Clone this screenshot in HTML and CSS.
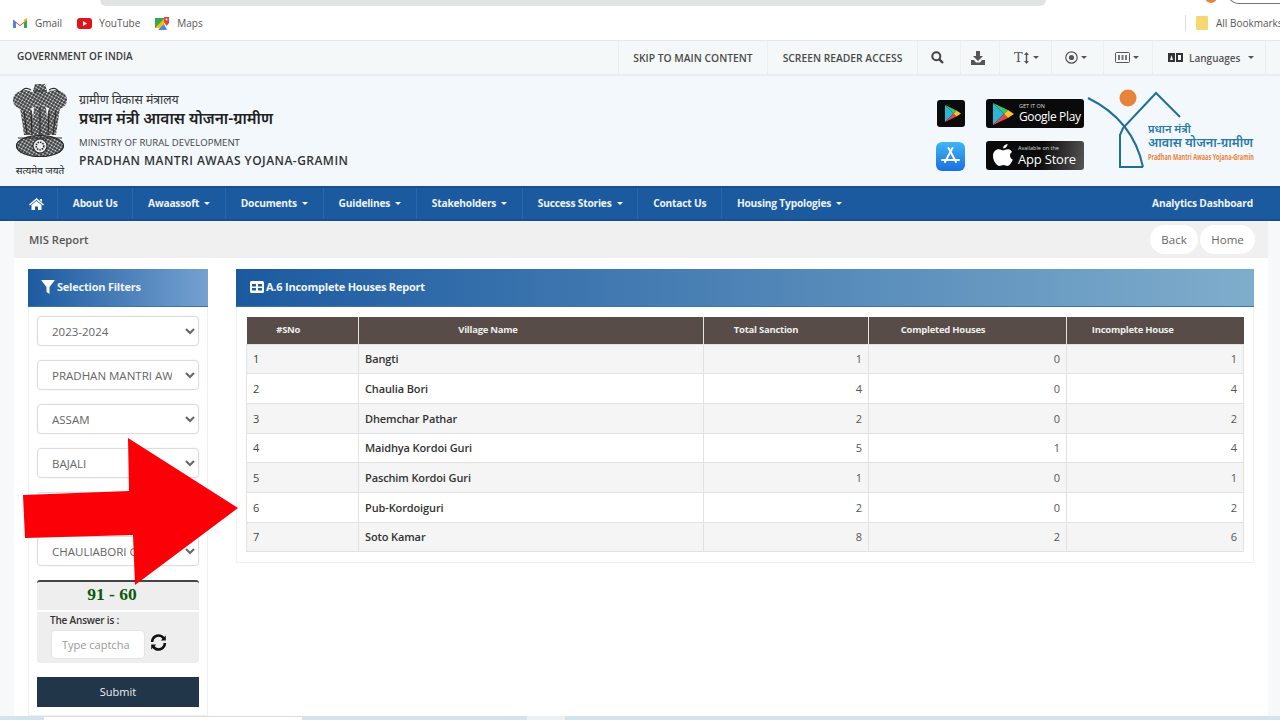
FILE: index.html
```html
<!DOCTYPE html>
<html lang="en">
<head>
<meta charset="utf-8">
<title>A.6 Incomplete Houses Report</title>
<link rel="stylesheet" href="styles.css">
</head>
<body>
<div class="browser">
  <div class="omni-row">
    <div class="omnibox"></div>
    <div class="ext-dot"></div>
    <div class="profile"></div>
  </div>
  <div class="bookmarks">
    <span class="bm bm-gmail">
      <svg class="bm-icon" width="14" height="11" viewBox="0 0 14 11"><path d="M0 1.500 7 7l7-5.500V10h-3V5L7 8 3 5v5H0z" fill="#e44336"/><path d="M0 2v8h3V4.500z" fill="#4a87e0"/><path d="M14 2v8h-3V4.500z" fill="#34a853"/><path d="M11 1.500 14 0v2l-3 2.500z" fill="#fbbc04"/></svg>Gmail</span>
    <span class="bm bm-yt">
      <svg class="bm-icon" width="15" height="11" viewBox="0 0 15 11"><rect width="15" height="11" rx="3" fill="#e0121b"/><path d="M6 3v5l4-2.500z" fill="#fff"/></svg>YouTube</span>
    <span class="bm bm-maps">
      <svg class="bm-icon" width="14" height="14" viewBox="0 0 14 14"><path d="M0 2h9v10H0z" fill="#34a853"/><path d="M0 12 9 3v9z" fill="#fbbc04"/><path d="M3 14l6-6 3 6z" fill="#4a87e0"/><path d="M9 1h5v6l-2.500 3L9 6z" fill="#e44336"/><circle cx="11.500" cy="3.500" r="1" fill="#fff"/></svg>Maps</span>
    <span class="bm-spacer"></span>
    <span class="bm-sep"></span>
    <svg class="bm-folder" width="12" height="14" viewBox="0 0 12 14"><rect width="12" height="14" rx="1" fill="#f6d873"/></svg>
    <span class="bm bm-all">All Bookmarks</span>
  </div>
</div>

<div class="govbar">
  <span class="gov-title">GOVERNMENT OF INDIA</span>
  <div class="gov-tools">
    <a class="tool tool-text">SKIP TO MAIN CONTENT</a>
    <a class="tool tool-text">SCREEN READER ACCESS</a>
    <a class="tool tool-search"><svg width="13" height="13" viewBox="0 0 13 13"><circle cx="5.300" cy="5.300" r="4" fill="none" stroke="#444" stroke-width="2"/><path d="M8.300 8.300 12 12" stroke="#444" stroke-width="2.400"/></svg></a>
    <a class="tool tool-dl"><svg width="14" height="14" viewBox="0 0 14 14"><path d="M5 0h4v5h3L7 10 2 5h3z" fill="#555"/><path d="M0 9h3l2 2.500h4L11 9h3v5H0z" fill="#555"/></svg></a>
    <a class="tool tool-size"><span class="t-big">T</span><svg width="5" height="12" viewBox="0 0 5 12"><path d="M2.500 0 5 3H3.200v6H5l-2.500 3L0 9h1.800V3H0z" fill="#555"/></svg><i class="caret caret-dark"></i></a>
    <a class="tool tool-contrast"><svg width="13" height="13" viewBox="0 0 13 13"><circle cx="6.500" cy="6.500" r="5.700" fill="none" stroke="#555" stroke-width="1.200"/><circle cx="6.500" cy="6.500" r="2.600" fill="#555"/></svg><i class="caret caret-dark"></i></a>
    <a class="tool tool-sign"><svg width="15" height="11" viewBox="0 0 15 11"><rect x=".5" y=".5" width="14" height="10" rx="1" fill="none" stroke="#555"/><path d="M3 3h2v5H3zM6.500 3h2v5h-2zM10 3h2v5h-2z" fill="#777"/></svg><i class="caret caret-dark"></i></a>
    <a class="tool tool-lang"><svg width="15" height="9" viewBox="0 0 15 9"><rect width="7" height="9" fill="#333"/><rect x="8" width="7" height="9" fill="#333"/><path d="M2 7l1.500-5L5 7zM10 2h3v5h-3z" fill="#f4f7f8"/></svg><span>Languages</span><i class="caret caret-dark caret-lang"></i></a>
  </div>
</div>

<header class="masthead">
  <div class="brand">
    <div class="emblem">
      <svg width="54" height="80" viewBox="0 0 54 80">
        <defs>
          <pattern id="stip" width="3" height="3" patternUnits="userSpaceOnUse" patternTransform="rotate(30)">
            <rect width="3" height="3" fill="#2c2c2c"/>
            <circle cx="1.500" cy="1.500" r="1.050" fill="#e9eff1"/>
          </pattern>
          <g id="cap">
            <path d="M22 1h10l2 7H20z"/>
            <ellipse cx="27" cy="15" rx="11" ry="8"/>
            <ellipse cx="12" cy="17" rx="12" ry="10"/>
            <ellipse cx="42" cy="17" rx="12" ry="10"/>
            <path d="M7 25h11l3 13-2 14h-8L9 38z"/>
            <path d="M36 25h11l-2 13-2 14h-8l-2-14z"/>
            <path d="M21 23h12l2 29H19z"/>
            <ellipse cx="27" cy="63" rx="24" ry="11"/>
          </g>
        </defs>
        <use href="#cap" fill="url(#stip)"/>
        <g fill="none" stroke="#2c2c2c" stroke-width="1.200">
          <ellipse cx="27" cy="63" rx="23.500" ry="10.500"/>
          <path d="M5 55h44M11 28l3 24M18 28l1 24M27 24v28M36 28l-1 24M43 28l-3 24"/>
          <path d="M8 9q4-6 10-2M46 9q-4-6-10-2M20 8h14"/>
        </g>
        <circle cx="27" cy="63" r="7" fill="#e9eff1" stroke="#2c2c2c" stroke-width="1.200"/>
        <circle cx="27" cy="63" r="3.800" fill="none" stroke="#2c2c2c" stroke-width="1.600" stroke-dasharray="1.500 1"/>
      </svg>
      <span class="emblem-motto">सत्यमेव जयते</span>
    </div>
    <div class="brand-text">
      <div class="hi-small">ग्रामीण विकास मंत्रालय</div>
      <div class="hi-large">प्रधान मंत्री आवास योजना-ग्रामीण</div>
      <div class="en-small">MINISTRY OF RURAL DEVELOPMENT</div>
      <div class="en-large">PRADHAN MANTRI AWAAS YOJANA-GRAMIN</div>
    </div>
  </div>
  <div class="apps">
    <div class="app-icons">
      <svg class="app-icon" width="28" height="27" viewBox="0 0 28 27"><rect width="28" height="27" rx="3" fill="#0b0b0b"/><path d="M8 5v17l8.500-8.500z" fill="#29b6d8"/><path d="M8 5l8.500 8.500 3-3z" fill="#39c36b"/><path d="M8 22l8.500-8.500 3 3z" fill="#e8434a"/><path d="M19.500 10.500 24 13.500l-4.500 3-3-3z" fill="#fbc02d"/></svg>
      <svg class="app-icon" width="29" height="29" viewBox="0 0 29 29"><defs><linearGradient id="asg" x1="0" y1="0" x2="0" y2="1"><stop offset="0" stop-color="#3fb6f5"/><stop offset="1" stop-color="#1a6fe0"/></linearGradient></defs><rect width="29" height="29" rx="6" fill="url(#asg)"/><path d="M16.500 6 9 20M12.500 6 20 20M6 18h17" stroke="#fff" stroke-width="2" stroke-linecap="round" fill="none"/></svg>
    </div>
    <div class="badges">
      <a class="badge">
        <svg width="22" height="24" viewBox="0 0 22 24"><path d="M1 1v22l11-11z" fill="#29b6d8"/><path d="M1 1l11 11 4-4z" fill="#39c36b"/><path d="M1 23l11-11 4 4z" fill="#e8434a"/><path d="M16 8l6 4-6 4-4-4z" fill="#fbc02d"/></svg>
        <span class="badge-text"><small class="badge-small">GET IT ON</small><b class="badge-big badge-gp">Google Play</b></span>
      </a>
      <a class="badge badge-apple">
        <svg width="20" height="23" viewBox="0 0 20 23"><path d="M14.500 0c.2 2-1.800 4.500-4.300 4.400C9.900 2.300 12.200.1 14.500 0zM19 8c-3 1.800-2.400 6.200.8 7.600-1.100 3-3.200 6.400-5.300 6.400-1.500 0-2.200-1-4-1s-2.500 1-4 1C3.500 22 0 16.500 0 12c0-4.500 3-6.800 5.600-6.800 1.900 0 3.200 1.100 4.600 1.100 1.300 0 2.800-1.300 5-1.100 1.100 0 2.800.6 3.800 2.800z" fill="#fff"/></svg>
        <span class="badge-text"><small class="badge-small">Available on the</small><b class="badge-big">App Store</b></span>
      </a>
    </div>
    <svg class="pmay" width="168" height="80" viewBox="0 0 168 80">
      <circle cx="41" cy="8" r="8.500" fill="#e8833a"/>
      <path d="M1 8Q46 30 56 77" fill="none" stroke="#1f6f96" stroke-width="2"/>
      <path d="M93 27 69 3 36 38 33 45V77H56" fill="none" stroke="#1f6f96" stroke-width="2"/>
      <text class="pmay-hi" x="61" y="43" font-size="11">प्रधान मंत्री</text>
      <text class="pmay-hi" x="61" y="57" font-size="12" textLength="105" lengthAdjust="spacingAndGlyphs">आवास योजना-ग्रामीण</text>
      <text class="pmay-en" x="61" y="70" font-size="9" textLength="106" lengthAdjust="spacingAndGlyphs">Pradhan Mantri Awaas Yojana-Gramin</text>
    </svg>
  </div>
</header>

<nav class="mainnav">
  <a class="nav-item nav-home"><svg width="15" height="12" viewBox="0 0 15 12"><path d="M7.500 0 15 6.500l-1 1-6.500-5.500L1 7.500l-1-1zM2.500 7 7.500 3l5 4v5h-3.500V8.500H6V12H2.500zM11 1h2v3l-2-1.700z" fill="#fff"/></svg></a>
  <a class="nav-item">About Us</a>
  <a class="nav-item">Awaassoft<i class="caret"></i></a>
  <a class="nav-item">Documents<i class="caret"></i></a>
  <a class="nav-item">Guidelines<i class="caret"></i></a>
  <a class="nav-item">Stakeholders<i class="caret"></i></a>
  <a class="nav-item">Success Stories<i class="caret"></i></a>
  <a class="nav-item">Contact Us</a>
  <a class="nav-item nav-last">Housing Typologies<i class="caret"></i></a>
  <a class="nav-right">Analytics Dashboard</a>
</nav>

<div class="page">
  <div class="crumbs">
    <span class="crumb-title">MIS Report</span>
    <div class="crumb-btns">
      <a class="pill pill-back">Back</a>
      <a class="pill pill-home">Home</a>
    </div>
  </div>
  <main class="content">
    <aside class="filters">
      <h2 class="panel-head filters-head"><svg width="14" height="14" viewBox="0 0 14 14"><path d="M0 0h14L8.500 7v7L5.500 12V7z" fill="#fff"/></svg>Selection Filters</h2>
      <form class="filter-form">
        <select class="field"><option>2023-2024</option></select>
        <select class="field"><option>PRADHAN MANTRI AWAAS YOJANA</option></select>
        <select class="field"><option>ASSAM</option></select>
        <select class="field"><option>BAJALI</option></select>
        <select class="field"><option>BAJALI</option></select>
        <select class="field"><option>CHAULIABORI GAON</option></select>
        <div class="captcha-q">91 - 60</div>
        <div class="captcha-a">
          <label class="captcha-label">The Answer is :</label>
          <div class="captcha-row">
            <input class="captcha-input" placeholder="Type captcha">
            <svg class="refresh" width="17" height="17" viewBox="0 0 17 17"><path d="M13.800 4.500A6.300 6.300 0 0 0 3 4.600 6.300 6.300 0 0 0 2.200 8" fill="none" stroke="#111" stroke-width="2.600"/><path d="M3.200 12.500A6.300 6.300 0 0 0 14 12.400 6.300 6.300 0 0 0 14.800 9" fill="none" stroke="#111" stroke-width="2.600"/><path d="M15.800 1.500v5h-5zM1.200 15.500v-5h5z" fill="#111"/></svg>
          </div>
        </div>
        <button class="submit" type="button">Submit</button>
      </form>
    </aside>
    <section class="report">
      <h2 class="panel-head report-head"><svg width="14" height="12" viewBox="0 0 14 12"><path fill-rule="evenodd" d="M1.500 0h11A1.500 1.500 0 0 1 14 1.500v9a1.500 1.500 0 0 1-1.500 1.500h-11A1.500 1.500 0 0 1 0 10.500v-9A1.500 1.500 0 0 1 1.500 0zM2 3v2.500h4V3zM8 3v2.500h4V3zM2 7v2.500h4V7zM8 7v2.500h4V7z" fill="#fff"/></svg>A.6 Incomplete Houses Report</h2>
      <div class="report-body">
        <table class="grid">
          <colgroup><col class="c1"><col class="c2"><col class="c3"><col class="c4"><col class="c5"></colgroup>
          <thead>
            <tr><th>#SNo</th><th>Village Name</th><th>Total Sanction</th><th>Completed Houses</th><th>Incomplete House</th></tr>
          </thead>
          <tbody>
            <tr><td>1</td><td class="name">Bangti</td><td class="num">1</td><td class="num">0</td><td class="num">1</td></tr>
            <tr><td>2</td><td class="name">Chaulia Bori</td><td class="num">4</td><td class="num">0</td><td class="num">4</td></tr>
            <tr><td>3</td><td class="name">Dhemchar Pathar</td><td class="num">2</td><td class="num">0</td><td class="num">2</td></tr>
            <tr><td>4</td><td class="name">Maidhya Kordoi Guri</td><td class="num">5</td><td class="num">1</td><td class="num">4</td></tr>
            <tr><td>5</td><td class="name">Paschim Kordoi Guri</td><td class="num">1</td><td class="num">0</td><td class="num">1</td></tr>
            <tr><td>6</td><td class="name">Pub-Kordoiguri</td><td class="num">2</td><td class="num">0</td><td class="num">2</td></tr>
            <tr><td>7</td><td class="name">Soto Kamar</td><td class="num">8</td><td class="num">2</td><td class="num">6</td></tr>
          </tbody>
        </table>
      </div>
    </section>
  </main>
</div>
<div class="taskstrip"><span class="strip-white"></span><span class="strip-light"></span></div>

<svg class="red-arrow" width="216" height="148" viewBox="0 0 216 148"><path d="M0 57 106 53 105 0 215 70 112 147 110 97 2 100z" fill="#fb0007"/></svg>
</body>
</html>
```
FILE: styles.css
```css
* { box-sizing: border-box; }
html, body { margin: 0; padding: 0; height: 720px; overflow: hidden; }
body {
  position: relative;
  display: flex;
  flex-direction: column;
  background: #f7f8f9;
  color: #333;
  font-family: "Open Sans", "Noto Sans", "Noto Sans Devanagari", "Liberation Sans", sans-serif;
  font-size: 12px;
}
a { color: inherit; text-decoration: none; }

/* browser chrome */
.browser { height: 40px; flex: none; background: #fff; overflow: hidden; }
.omni-row { height: 7px; display: flex; align-items: flex-start; }
.omnibox { flex: none; margin-left: 100px; width: 946px; height: 6px; background: #e2e3e3; border-radius: 0 0 8px 8px; }
.ext-dot { flex: none; margin-left: 159px; margin-top: -3px; width: 12px; height: 6px; border-radius: 0 0 6px 6px; background: #e8833a; }
.profile { flex: none; margin-left: 11px; margin-top: -6px; width: 60px; height: 10px; border: 1px solid #777; border-radius: 0 0 0 10px; }
.bookmarks { height: 32px; display: flex; align-items: center; padding-left: 13px; font-size: 10px; color: #555; white-space: nowrap; }
.bm { display: flex; align-items: center; }
.bm-icon { margin-right: 8px; }
.bm-gmail { margin-right: 15px; }
.bm-yt { margin-right: 15px; }
.bm-yt .bm-icon { margin-right: 7px; }
.bm-spacer { flex: 1; }
.bm-sep { width: 1px; height: 16px; background: #ddd; margin-right: 10px; }
.bm-folder { margin-right: 8px; flex: none; }
.bm-all { width: 64px; flex: none; }

/* government bar */
.govbar {
  height: 36px; flex: none;
  display: flex; justify-content: space-between; align-items: stretch;
  padding: 0 14px 0 17px;
  background: #f5f8f9;
  border-top: 1px solid #e6e8e8;
  border-bottom: 2px solid #ebeeef;
}
.gov-title { font-size: 10px; font-weight: 600; color: #3a3a3a; line-height: 30px; }
.gov-tools { display: flex; align-items: stretch; }
.tool { display: flex; align-items: center; justify-content: center; border-left: 1px solid #ebeeef; color: #444; }
.tool-text { width: 149px; font-size: 10.300px; font-weight: 600; color: #4a4a4a; white-space: nowrap; }
.tool-text + .tool-text { width: 150px; }
.tool-search { width: 43px; padding-right: 4px; }
.tool-dl { width: 39px; padding-right: 4px; }
.tool-size { width: 52px; gap: 1px; justify-content: flex-start; padding-left: 14px; }
.t-big { font-family: "DejaVu Serif", "Liberation Serif", serif; font-size: 13px; color: #555; line-height: 1; }
.tool-contrast { width: 52px; padding-right: 3px; }
.tool-sign { width: 49px; padding-right: 3px; }
.tool-lang { width: 114px; border-right: 1px solid #ebeeef; gap: 6px; font-size: 10px; font-weight: 600; color: #555; justify-content: flex-start; padding-left: 15px; }
.caret {
  display: inline-block; width: 0; height: 0; margin-left: 5px;
  border-left: 3px solid transparent; border-right: 3px solid transparent; border-top: 3px solid #fff;
}
.caret-dark { border-top-color: #555; margin-left: 3px; }
.caret-lang { margin-left: 2px; }

/* masthead */
.masthead {
  height: 110px; flex: none;
  display: flex; justify-content: space-between;
  background: #f2f8fb;
  padding-left: 13px;
}
.brand { display: flex; }
.emblem { width: 54px; display: flex; flex-direction: column; align-items: center; padding-top: 7px; }
.emblem svg { display: block; flex: none; }
.emblem-motto { font-size: 10px; line-height: 10px; white-space: nowrap; color: #222; margin-top: 2px; }
.brand-text { margin-left: 12px; padding-top: 16px; white-space: nowrap; }
.hi-small { font-size: 12.300px; line-height: 16px; color: #333; }
.hi-large { font-size: 15.500px; font-weight: 600; line-height: 20px; color: #222; }
.en-small { font-size: 9.600px; line-height: 14px; margin-top: 8px; color: #444; }
.en-large { font-size: 12px; font-weight: 600; line-height: 18px; letter-spacing: .47px; color: #333; margin-top: 2px; }
.apps { display: flex; align-items: flex-start; padding-top: 14px; }
.app-icons { display: flex; flex-direction: column; align-items: center; width: 29px; margin-top: 10px; gap: 15px; }
.app-icon { display: block; }
.badges { display: flex; flex-direction: column; gap: 13px; margin-left: 21px; margin-top: 9px; }
.badge {
  width: 98px; height: 29px; display: flex; align-items: center; gap: 5px; padding-left: 6px;
  background: #0a0a0a; border-radius: 3px; color: #fff; white-space: nowrap;
}
.badge-apple { background: linear-gradient(100deg, #0a0a0a 55%, #555); padding-left: 7px; }
.badge-text { display: flex; flex-direction: column; line-height: 1; }
.badge-small { font-size: 5.500px; line-height: 7px; color: #ddd; }
.badge-big { font-weight: 400; font-size: 13px; line-height: 14px; letter-spacing: -.2px; }
.badge-gp { font-size: 12px; letter-spacing: -.35px; }
.pmay { display: block; margin-left: 3px; margin-right: 25px; flex: none; overflow: visible; }
.pmay-hi { fill: #2a78a8; font-weight: 600; }
.pmay-en { fill: #e8833a; font-weight: 700; }

/* nav */
.mainnav {
  height: 35px; flex: none;
  display: flex; align-items: stretch;
  padding: 0 27px 0 15px;
  background: #1c5aa0;
  border-top: 2px solid #174f8f;
  border-bottom: 2px solid #174f8f;
  color: #eef3f8; font-size: 10.200px; font-weight: 700; letter-spacing: -.2px; white-space: nowrap;
}
.nav-item { display: flex; align-items: center; padding: 0 14.800px 1px; border-right: 1px solid #2a66aa; }
.nav-home { width: 43px; justify-content: center; padding: 0; }
.nav-last { border-right: 0; }
.nav-right { margin-left: auto; display: flex; align-items: center; padding-bottom: 1px; }

/* page */
.page { flex: 1; min-height: 0; display: flex; flex-direction: column; margin: 0 12px 0 14px; background: #fff; }
.crumbs { height: 37px; flex: none; display: flex; justify-content: space-between; align-items: center; background: #f0f0f0; padding: 0 13px 0 15px; }
.crumb-title { font-size: 11.200px; font-weight: 600; color: #555; }
.crumb-btns { display: flex; gap: 2px; }
.pill { height: 29px; display: flex; align-items: center; justify-content: center; background: #fff; border-radius: 15px; font-size: 11.500px; color: #666; }
.pill-back { width: 48px; }
.pill-home { width: 55px; }
.content { flex: 1; min-height: 0; display: flex; align-items: flex-start; padding: 11px 14px 0; gap: 28px; }

.panel-head {
  margin: 0; height: 38px; display: flex; align-items: center; padding-bottom: 2px;
  font-size: 11px; font-weight: 700; letter-spacing: -.22px; color: #eef4fa; white-space: nowrap;
  border-bottom: 1px solid #3a76a6;
}
.filters { width: 180px; flex: none; height: 447px; border: 1px solid #f0f0f0; border-top: 0; }
.filters-head { background: linear-gradient(90deg, #1c5aa0, #75a1d0); padding-left: 13px; gap: 2px; margin: 0 -1px; }
.filter-form { display: flex; flex-direction: column; padding: 9px 8px 0; }
.field {
  width: 162px; height: 30px; flex: none; margin-bottom: 14px; padding: 0 10px;
  border: 1px solid #dcdcdc; border-radius: 4px; background: #fff;
  font-family: inherit; font-size: 11.500px; color: #666;
  box-shadow: 0 0 2px rgba(0,0,0,.08);
}
.captcha-q {
  height: 30px; flex: none; background: #eee; border-top: 2px solid #444; border-radius: 3px 3px 0 0; padding-right: 12px;
  text-align: center; font-family: "Liberation Serif", serif; font-size: 17.500px; font-weight: 700; color: #0c5a0c; line-height: 25px;
}
.captcha-a { height: 51px; flex: none; margin-top: 2px; background: #eee; padding: 1px 0 0 13px; border-radius: 0 0 3px 3px; }
.captcha-label { display: block; font-size: 10px; font-weight: 600; letter-spacing: -.2px; color: #333; line-height: 14px; }
.captcha-row { display: flex; align-items: center; gap: 5px; margin-top: 3px; padding-left: 1px; }
.captcha-input { width: 94px; height: 29px; padding: 0 10px; border: 1px solid #e4e4e4; border-radius: 4px; font-family: inherit; font-size: 11px; background: #fff; }
.captcha-input::placeholder { color: #999; }
.refresh { margin-bottom: 4px; flex: none; }
.submit { height: 30px; margin-top: 14px; padding: 0 0 2px; background: #22364a; border: 0; color: #eee; font-family: inherit; font-size: 11px; font-weight: 400; flex: none; }

.report { width: 1018px; flex: none; border: 1px solid #f0f0f0; border-top: 0; }
.report-head { background: linear-gradient(90deg, #1c5aa0, #7fadcc); padding-left: 14px; gap: 2px; margin: 0 -1px; }
.report-body { padding: 10px 10px 10px 9px; }
.grid { width: 997px; table-layout: fixed; border-collapse: collapse; }
.c1 { width: 112px; } .c2 { width: 345px; } .c3 { width: 165px; } .c4 { width: 198px; } .c5 { width: 177px; }
.grid th {
  height: 27px; padding: 0 0 2px; background: #574c47; color: #eee; font-size: 9.500px; font-weight: 700; letter-spacing: -.25px;
  border: 1px solid #e4e4e4; border-top: 0; border-bottom: 0; text-align: center;
}
.grid th:first-child { border-left: 0; padding-right: 28px; }
.grid th:nth-child(2) { padding-right: 86px; }
.grid th:nth-child(3) { padding-right: 40px; }
.grid th:nth-child(4) { padding-right: 49px; }
.grid th:last-child { border-right: 0; padding-right: 45px; }
.grid td { height: 29.700px; padding: 0 6px; border: 1px solid #e2e2e2; font-size: 11px; letter-spacing: -.12px; color: #444; }
.grid tbody tr:nth-child(odd) td { background: #f5f5f5; }
.grid td.name { font-weight: 600; color: #333; }
.grid td.num { text-align: right; color: #555; }

/* strip at the window's bottom edge */
.taskstrip { height: 4px; flex: none; display: flex; background: #d3e4ec; }
.strip-white { margin-left: 44px; width: 258px; background: #fff; border-top: 1px solid #ddd; }
.strip-light { margin-left: 225px; width: 38px; background: #eef1f3; }

/* annotation drawn over the page */
.red-arrow { position: absolute; left: 23px; top: 438px; }
```
